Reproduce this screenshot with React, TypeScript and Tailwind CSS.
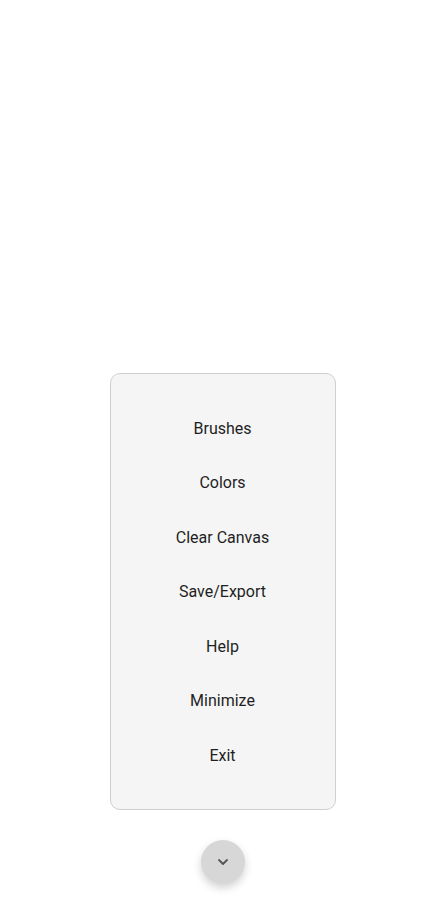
const ITEMS = ['Brushes', 'Colors', 'Clear Canvas', 'Save/Export', 'Help', 'Minimize', 'Exit'];

export default function App() {
  return (
    <div className="flex min-h-[900px] flex-col items-center justify-end bg-white pb-4 font-['Roboto',sans-serif]">
      {/* ── Menu panel ── */}
      <div className="flex w-[226px] flex-col rounded-[10px] border border-[#cfcfcf] bg-[#f5f5f5] pt-[28px] pb-[26px]">
        {ITEMS.map((label) => (
          <button
            key={label}
            className="flex h-[54.5px] items-center justify-center text-[16px] text-[#1f1f1f]"
          >
            {label}
          </button>
        ))}
      </div>

      {/* ── Collapse toggle ── */}
      <button className="mt-[30px] flex h-11 w-11 items-center justify-center rounded-full bg-[#d7d7d7] shadow-[0_4px_8px_rgba(0,0,0,0.18)]">
        <svg width="12" height="8" viewBox="0 0 12 8" fill="none">
          <path d="M2 2l4 4 4-4" stroke="#555" strokeWidth="1.8" strokeLinecap="round" strokeLinejoin="round" />
        </svg>
      </button>
    </div>
  );
}
